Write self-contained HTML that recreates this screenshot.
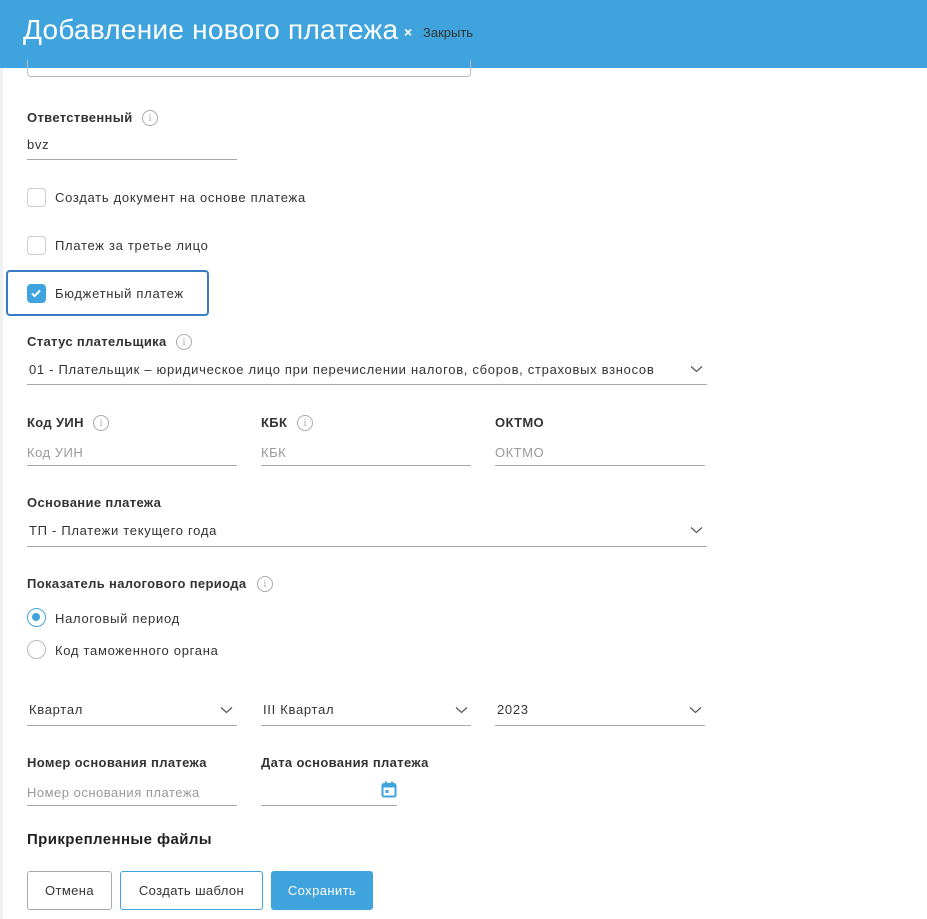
<!DOCTYPE html>
<html><head><meta charset="utf-8"><style>
*{box-sizing:border-box;margin:0;padding:0}
body{width:927px;height:919px;overflow:hidden;background:#fff;font-family:"Liberation Sans","Noto Sans CJK SC",sans-serif;color:#333;position:relative}
.hdr{position:absolute;left:0;top:0;width:927px;height:68px;background:#3fa4dd}
.hdr .t{position:absolute;left:23px;top:14px;font-size:28px;color:#fff;letter-spacing:0.25px}
.hdr .x{position:absolute;left:404px;top:24px;font-size:14px;color:#fff;font-weight:bold}
.hdr .c{position:absolute;left:423px;top:25px;font-size:13px;color:#333}
.strip{position:absolute;left:0;top:68px;width:3px;height:851px;background:#eef0f3}
.a{position:absolute}
.lbl{font-size:13px;font-weight:bold;color:#333;letter-spacing:0.35px}
.txt{font-size:13px;color:#333;letter-spacing:0.7px}
.ph{font-size:13px;color:#999;letter-spacing:0.5px}
.ul{position:absolute;height:1px;background:#aaa}
.cb{position:absolute;width:19px;height:19px;border:1.5px solid #ccc;border-radius:4px;background:#fff}
.info{position:absolute;width:16px;height:16px;border:1.3px solid #aaa;border-radius:50%;color:#aaa;font-size:11px;text-align:center;line-height:14px;font-family:"Liberation Serif",serif}
.chev{position:absolute;width:13px;height:8px}
.rad{position:absolute;width:19px;height:19px;border:1.5px solid #bbb;border-radius:50%}
.btn{position:absolute;height:39px;border-radius:3px;font-size:13px;text-align:center;line-height:37px;letter-spacing:0.4px}
</style></head><body>
<div class="hdr"><div class="t">Добавление нового платежа</div><div class="x">×</div><div class="c">Закрыть</div></div>
<div class="strip"></div>
<div class="a" style="left:27px;top:60px;width:444px;height:17px;border:1px solid #bbb;border-top:none;border-radius:0 0 4px 4px"></div>

<div class="a lbl" style="left:27px;top:110px">Ответственный</div><div class="info" style="left:142px;top:110px">i</div>
<div class="a txt" style="left:27px;top:137px">bvz</div><div class="ul" style="left:27px;top:159px;width:210px"></div>

<div class="cb" style="left:27px;top:188px"></div><div class="a txt" style="left:55px;top:190px">Создать документ на основе платежа</div>
<div class="cb" style="left:27px;top:236px"></div><div class="a txt" style="left:55px;top:238px">Платеж за третье лицо</div>
<div class="a" style="left:6px;top:270px;width:203px;height:46px;border:2px solid #3a7bc8;border-radius:4px"></div>
<div class="cb" style="left:27px;top:284px;background:#3fa4dd;border-color:#3fa4dd"><svg width="16" height="16" viewBox="0 0 16 16" style="position:absolute;left:0;top:0"><path d="M4 8.5l2.6 2.6L12 5.5" stroke="#fff" stroke-width="2" fill="none"/></svg></div>
<div class="a txt" style="left:55px;top:286px">Бюджетный платеж</div>

<div class="a lbl" style="left:27px;top:334px">Статус плательщика</div><div class="info" style="left:176px;top:334px">i</div>
<div class="a txt" style="left:29px;top:362px">01 - Плательщик – юридическое лицо при перечислении налогов, сборов, страховых взносов</div>
<svg class="chev" style="left:690px;top:365px" viewBox="0 0 13 8"><path d="M1 1.5l5.5 5 5.5-5" stroke="#555" stroke-width="1.2" fill="none"/></svg>
<div class="ul" style="left:27px;top:384px;width:680px"></div>

<div class="a lbl" style="left:27px;top:415px">Код УИН</div><div class="info" style="left:93px;top:415px">i</div>
<div class="a lbl" style="left:261px;top:415px">КБК</div><div class="info" style="left:297px;top:415px">i</div>
<div class="a lbl" style="left:495px;top:415px">ОКТМО</div>
<div class="a ph" style="left:27px;top:445px">Код УИН</div><div class="ul" style="left:27px;top:465px;width:210px"></div>
<div class="a ph" style="left:261px;top:445px">КБК</div><div class="ul" style="left:261px;top:465px;width:210px"></div>
<div class="a ph" style="left:495px;top:445px">ОКТМО</div><div class="ul" style="left:495px;top:465px;width:210px"></div>

<div class="a lbl" style="left:27px;top:495px">Основание платежа</div>
<div class="a txt" style="left:29px;top:523px">ТП - Платежи текущего года</div>
<svg class="chev" style="left:690px;top:526px" viewBox="0 0 13 8"><path d="M1 1.5l5.5 5 5.5-5" stroke="#555" stroke-width="1.2" fill="none"/></svg>
<div class="ul" style="left:27px;top:546px;width:680px"></div>

<div class="a lbl" style="left:27px;top:576px">Показатель налогового периода</div><div class="info" style="left:257px;top:576px">i</div>
<div class="rad" style="left:27px;top:608px;border-color:#3fa4dd"><div style="position:absolute;left:4px;top:4px;width:8px;height:8px;border-radius:50%;background:#3fa4dd"></div></div>
<div class="a txt" style="left:55px;top:611px">Налоговый период</div>
<div class="rad" style="left:27px;top:640px"></div>
<div class="a txt" style="left:55px;top:643px">Код таможенного органа</div>

<div class="a txt" style="left:29px;top:702px">Квартал</div>
<svg class="chev" style="left:220px;top:706px" viewBox="0 0 13 8"><path d="M1 1.5l5.5 5 5.5-5" stroke="#555" stroke-width="1.2" fill="none"/></svg>
<div class="ul" style="left:27px;top:725px;width:210px"></div>
<div class="a txt" style="left:263px;top:702px">III Квартал</div>
<svg class="chev" style="left:455px;top:706px" viewBox="0 0 13 8"><path d="M1 1.5l5.5 5 5.5-5" stroke="#555" stroke-width="1.2" fill="none"/></svg>
<div class="ul" style="left:261px;top:725px;width:210px"></div>
<div class="a txt" style="left:497px;top:702px">2023</div>
<svg class="chev" style="left:689px;top:706px" viewBox="0 0 13 8"><path d="M1 1.5l5.5 5 5.5-5" stroke="#555" stroke-width="1.2" fill="none"/></svg>
<div class="ul" style="left:495px;top:725px;width:210px"></div>

<div class="a lbl" style="left:27px;top:755px">Номер основания платежа</div>
<div class="a lbl" style="left:261px;top:755px">Дата основания платежа</div>
<div class="a ph" style="left:27px;top:785px">Номер основания платежа</div><div class="ul" style="left:27px;top:805px;width:210px"></div>
<svg class="a" style="left:381px;top:781px" width="16" height="17" viewBox="0 0 16 17"><rect x="1.5" y="3" width="13" height="12.5" rx="1.5" fill="none" stroke="#3fa4dd" stroke-width="2"/><rect x="1.5" y="3" width="13" height="3.5" fill="#3fa4dd"/><rect x="4" y="0.5" width="2" height="3" fill="#3fa4dd"/><rect x="10" y="0.5" width="2" height="3" fill="#3fa4dd"/><rect x="4.5" y="9" width="3" height="3" fill="#3fa4dd"/></svg>
<div class="ul" style="left:261px;top:805px;width:136px"></div>

<div class="a" style="left:27px;top:831px;font-size:15px;font-weight:bold;color:#222;letter-spacing:0.4px">Прикрепленные файлы</div>

<div class="btn" style="left:27px;top:871px;width:85px;border:1px solid #aaa;color:#333">Отмена</div>
<div class="btn" style="left:120px;top:871px;width:143px;border:1px solid #3fa4dd;color:#333">Создать шаблон</div>
<div class="btn" style="left:271px;top:871px;width:102px;background:#3fa4dd;color:#fff;line-height:39px">Сохранить</div>
</body></html>
